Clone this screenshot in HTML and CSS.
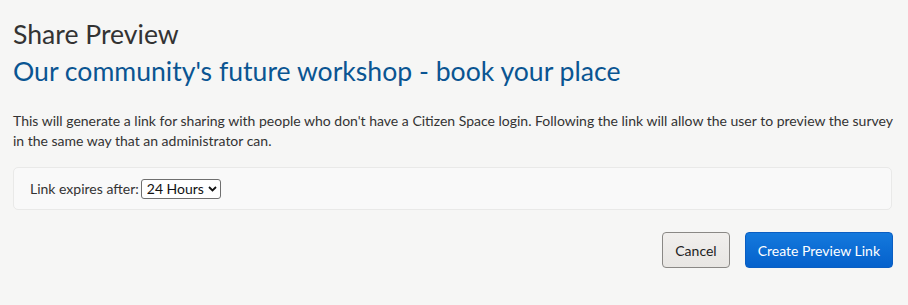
FILE: index.html
```html
<!DOCTYPE html>
<html lang="en">
<head>
<meta charset="utf-8">
<title>Share Preview</title>
<link rel="stylesheet" href="styles.css">
</head>
<body>
<div class="modal">
  <h1 class="title">Share Preview</h1>
  <h2 class="subtitle">Our community's future workshop - book your place</h2>
  <p class="intro">This will generate a link for sharing with people who don't have a Citizen Space login. Following the link will allow the user to preview the survey in the same way that an administrator can.</p>
  <div class="panel">
    <label class="field-label" for="expiry">Link expires after:</label>
    <select id="expiry" class="select">
      <option>24 Hours</option>
      <option>7 Days</option>
    </select>
  </div>
  <div class="actions">
    <button class="btn btn-cancel" type="button">Cancel</button>
    <button class="btn btn-primary" type="button">Create Preview Link</button>
  </div>
</div>
</body>
</html>
```

FILE: styles.css
```css
html, body {
  margin: 0;
  padding: 0;
  background: #f6f6f5;
}
body {
  font-family: Lato, "Liberation Sans", sans-serif;
  color: #333;
}
.modal {
  padding: 18px 15px 30px 13px;
}
.title {
  margin: 0;
  font-size: 26.6px;
  font-weight: 400;
  line-height: 32px;
  color: #333;
}
.subtitle {
  margin: 5px 0 0;
  font-size: 26.6px;
  font-weight: 400;
  line-height: 32px;
  color: #0a5592;
}
.intro {
  margin: 24px -6px 0 0;
  font-size: 14px;
  line-height: 20px;
  color: #333;
}
.panel {
  margin: 16px 1px 0 0;
  display: flex;
  align-items: center;
  gap: 2px;
  height: 41px;
  padding: 0 16px;
  border: 1px solid #e9e9e8;
  border-radius: 5px;
  background: #f9f9f9;
  font-size: 14px;
}
.field-label {
  color: #333;
}
.select {
  -webkit-appearance: none;
  appearance: none;
  font-family: Lato, "Liberation Sans", sans-serif;
  font-size: 14px;
  height: 20px;
  padding: 0 15px 0 5px;
  border: 1px solid #6f6f6f;
  border-radius: 3px;
  background-color: #fff;
  background-image: url("data:image/svg+xml,%3Csvg xmlns='http://www.w3.org/2000/svg' width='9' height='6' viewBox='0 0 9 6'%3E%3Cpath d='M1 1l3.5 3.5L8 1' fill='none' stroke='%23111' stroke-width='1.8'/%3E%3C/svg%3E");
  background-repeat: no-repeat;
  background-position: right 3px center;
  color: #111;
}
.actions {
  margin-top: 22px;
  display: flex;
  justify-content: flex-end;
  gap: 15px;
}
.btn {
  font-family: Lato, "Liberation Sans", sans-serif;
  font-size: 14px;
  height: 36px;
  border-radius: 4px;
  cursor: pointer;
}
.btn-cancel {
  padding: 0 12px;
  color: #222;
  background: linear-gradient(#f1efed, #e8e6e3);
  border: 1px solid #8a8885;
}
.btn-primary {
  padding: 0 12px;
  color: #fff;
  background: linear-gradient(#1479dd, #0561cc);
  border: 1px solid #0a5ec2;
}
```
